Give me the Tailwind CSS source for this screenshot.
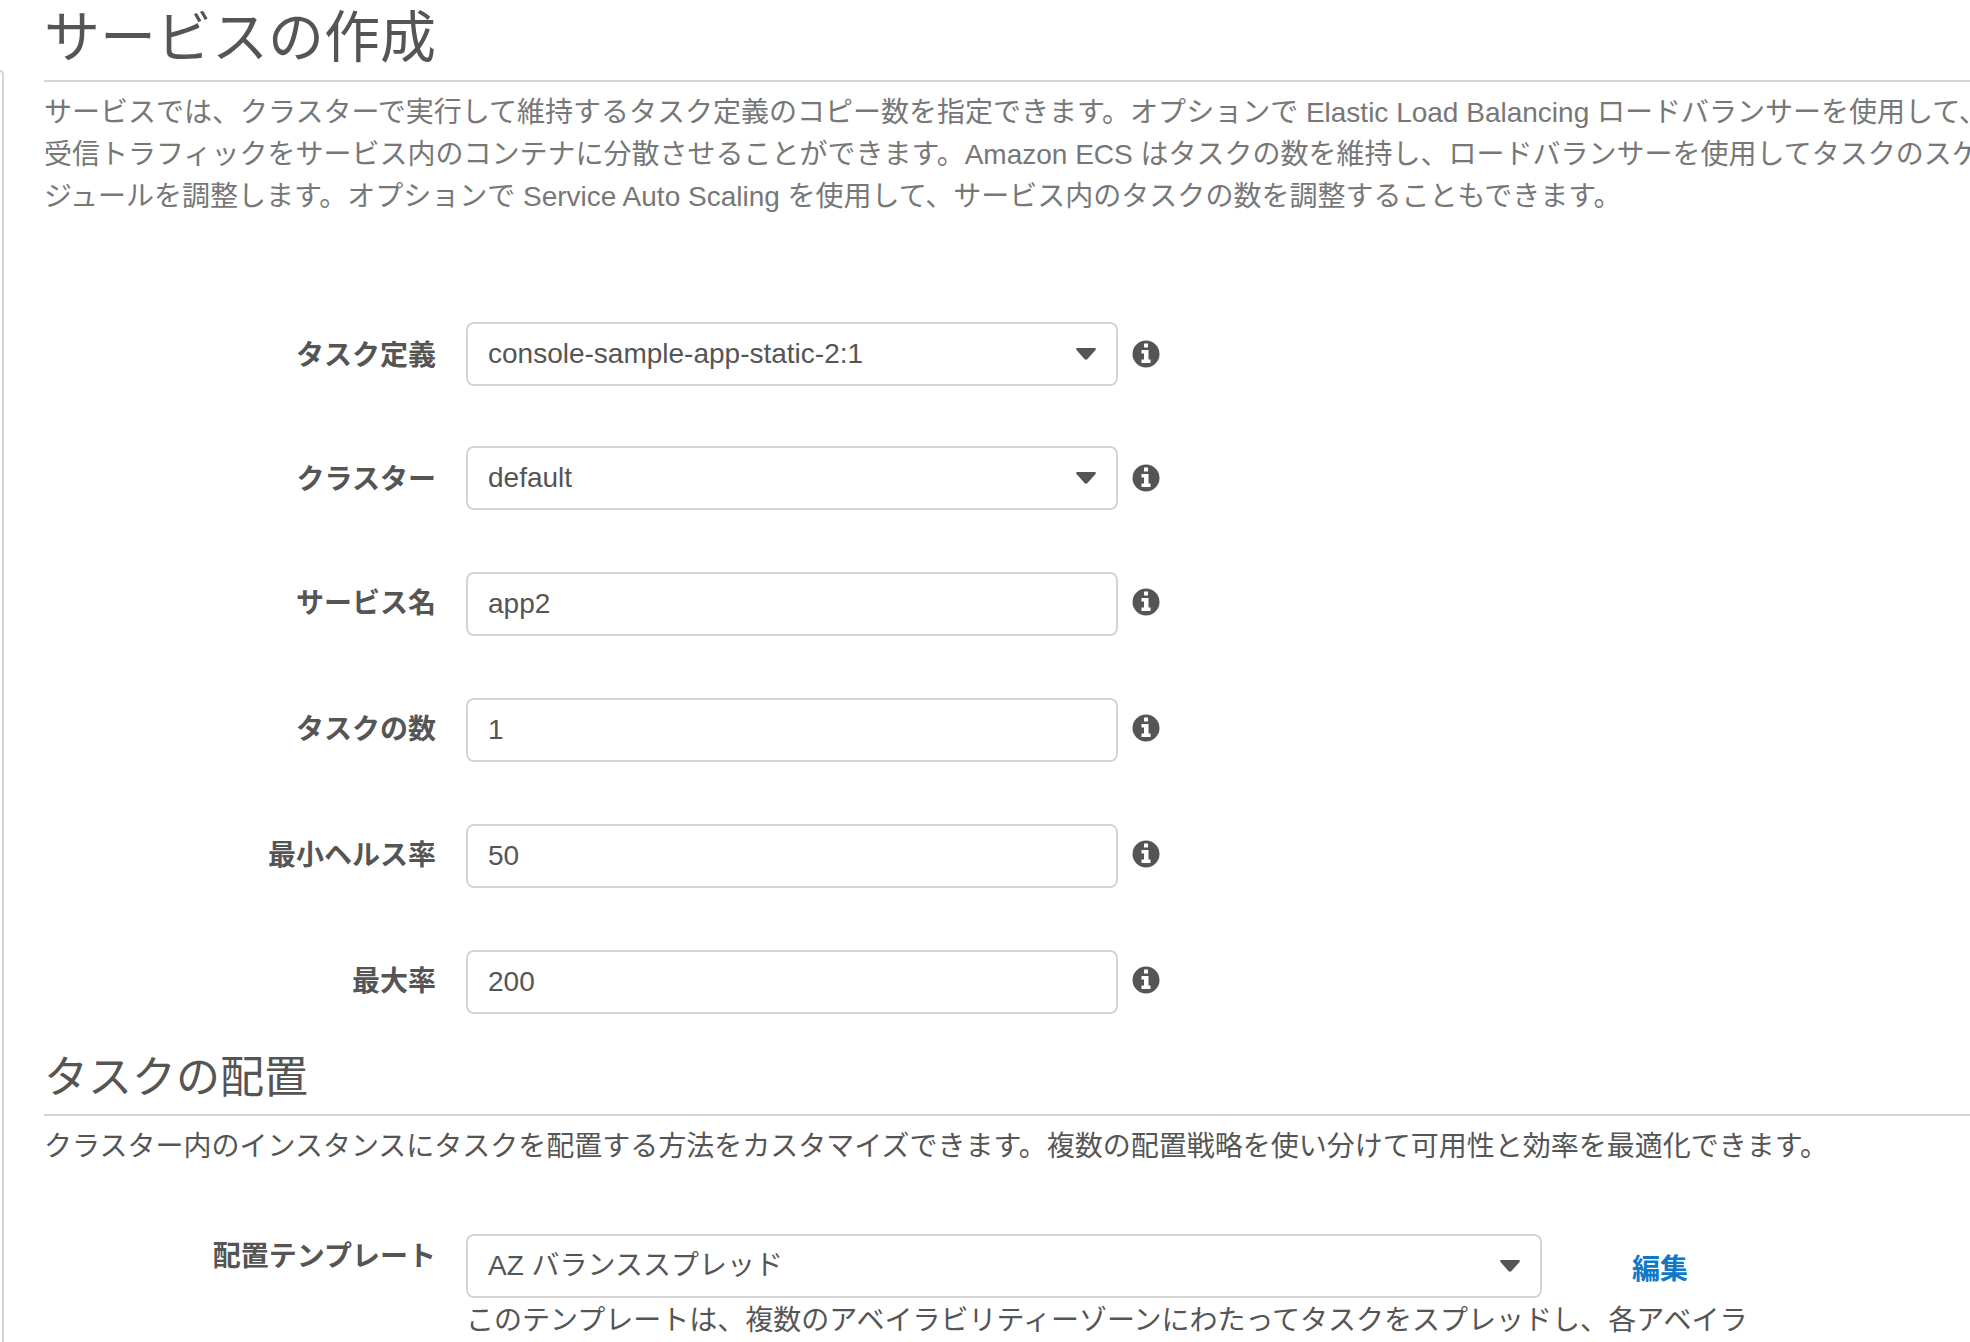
<!doctype html>
<html lang="ja">

<head>
    <meta charset="UTF-8">
    <meta name="viewport" content="width=device-width, initial-scale=1.0">
    <title>サービスの作成</title>
    <script src="https://cdn.jsdelivr.net/npm/@tailwindcss/browser@4"></script>
</head>

<body class="bg-white text-[#555555] text-[28px] leading-[42px] font-['Liberation_Sans','Noto_Sans_CJK_JP',sans-serif]">
    <svg class="hidden">
        <symbol id="info" viewBox="0 0 28 28">
            <circle cx="14" cy="14" r="13.500" fill="#555555" />
            <path fill="#ffffff" d="M12 3.500h4v4h-4zM9.500 10h7v9.500h2v3.500h-9v-3.500h2.500v-6h-2.500z" />
        </symbol>
        <symbol id="caret" viewBox="0 0 20 12">
            <path fill="#555555" d="M1 0h18q1.500 .5 .5 2l-8 9q-1.500 1.500 -3 0l-8 -9q-1 -1.500 .5 -2z" />
        </symbol>
    </svg>

    <div class="flex min-h-screen overflow-hidden">
        <!-- edge of the side panel -->
        <aside class="w-1 shrink-0 mt-[70px] border-t-2 border-r-2 border-[#d5d5d5] rounded-tr-sm"></aside>

        <main class="flex-1 min-w-0 pl-10">
            <h1 class="h-[82px] pt-1.5 text-[56px] leading-[64px] border-b-2 border-[#d5d5d5]">サービスの作成</h1>
            <p class="mt-2.5 text-[#777777] whitespace-nowrap">
                サービスでは、クラスターで実行して維持するタスク定義のコピー数を指定できます。オプションで Elastic Load Balancing ロードバランサーを使用して、<br>
                受信トラフィックをサービス内のコンテナに分散させることができます。Amazon ECS はタスクの数を維持し、ロードバランサーを使用してタスクのスケ<br>
                ジュールを調整します。オプションで Service Auto Scaling を使用して、サービス内のタスクの数を調整することもできます。
            </p>

            <form>
                <div class="mt-[104px] flex flex-col gap-[62px]">
                    <div class="-mb-0.5 flex items-center">
                        <label for="task_definition" class="w-[392px] mr-[30px] pt-1 text-right font-bold">タスク定義</label>
                        <div class="relative w-[652px]">
                            <select id="task_definition" class="w-full h-16 pl-5 pr-16 bg-white border-2 border-[#d5d5d5] rounded-lg appearance-none">
                                <option>console-sample-app-static-2:1</option>
                            </select>
                            <svg class="absolute right-[22px] top-[26px] w-5 h-3 pointer-events-none"><use href="#caret" /></svg>
                        </div>
                        <button type="button" aria-label="タスク定義の情報" class="ml-3.5"><svg class="w-7 h-7"><use href="#info" /></svg></button>
                    </div>
                    <div class="flex items-center">
                        <label for="cluster" class="w-[392px] mr-[30px] pt-1 text-right font-bold">クラスター</label>
                        <div class="relative w-[652px]">
                            <select id="cluster" class="w-full h-16 pl-5 pr-16 bg-white border-2 border-[#d5d5d5] rounded-lg appearance-none">
                                <option>default</option>
                            </select>
                            <svg class="absolute right-[22px] top-[26px] w-5 h-3 pointer-events-none"><use href="#caret" /></svg>
                        </div>
                        <button type="button" aria-label="クラスターの情報" class="ml-3.5"><svg class="w-7 h-7"><use href="#info" /></svg></button>
                    </div>
                    <div class="flex items-center">
                        <label for="service_name" class="w-[392px] mr-[30px] text-right font-bold">サービス名</label>
                        <input type="text" id="service_name" value="app2" class="w-[652px] h-16 px-5 border-2 border-[#d5d5d5] rounded-lg">
                        <button type="button" aria-label="サービス名の情報" class="ml-3.5 pb-1"><svg class="w-7 h-7"><use href="#info" /></svg></button>
                    </div>
                    <div class="flex items-center">
                        <label for="task_count" class="w-[392px] mr-[30px] text-right font-bold">タスクの数</label>
                        <input type="text" id="task_count" value="1" class="w-[652px] h-16 px-5 border-2 border-[#d5d5d5] rounded-lg">
                        <button type="button" aria-label="タスクの数の情報" class="ml-3.5 pb-1"><svg class="w-7 h-7"><use href="#info" /></svg></button>
                    </div>
                    <div class="flex items-center">
                        <label for="min_healthy" class="w-[392px] mr-[30px] text-right font-bold">最小ヘルス率</label>
                        <input type="text" id="min_healthy" value="50" class="w-[652px] h-16 px-5 border-2 border-[#d5d5d5] rounded-lg">
                        <button type="button" aria-label="最小ヘルス率の情報" class="ml-3.5 pb-1"><svg class="w-7 h-7"><use href="#info" /></svg></button>
                    </div>
                    <div class="flex items-center">
                        <label for="max_percent" class="w-[392px] mr-[30px] text-right font-bold">最大率</label>
                        <input type="text" id="max_percent" value="200" class="w-[652px] h-16 px-5 border-2 border-[#d5d5d5] rounded-lg">
                        <button type="button" aria-label="最大率の情報" class="ml-3.5 pb-1"><svg class="w-7 h-7"><use href="#info" /></svg></button>
                    </div>
                </div>

                <h2 class="mt-8 h-[70px] text-[44px] leading-[64px] border-b-2 border-[#d5d5d5]">タスクの配置</h2>
                <p class="mt-2.5 whitespace-nowrap">クラスター内のインスタンスにタスクを配置する方法をカスタマイズできます。複数の配置戦略を使い分けて可用性と効率を最適化できます。</p>

                <div class="mt-[66px] flex items-start">
                    <label for="template" class="w-[392px] mr-[30px] pt-0.5 text-right font-bold">配置テンプレート</label>
                    <div>
                        <div class="flex items-center">
                            <div class="relative w-[1076px]">
                                <select id="template" class="w-full h-16 pl-5 pr-16 bg-white border-2 border-[#d5d5d5] rounded-lg appearance-none">
                                    <option>AZ バランススプレッド</option>
                                </select>
                                <svg class="absolute right-[22px] top-[26px] w-5 h-3 pointer-events-none"><use href="#caret" /></svg>
                            </div>
                            <a href="#" class="ml-[90px] pt-2 font-bold text-[#0f78c8]">編集</a>
                        </div>
                        <p class="pt-0.5 whitespace-nowrap">このテンプレートは、複数のアベイラビリティーゾーンにわたってタスクをスプレッドし、各アベイラ</p>
                    </div>
                </div>
            </form>
        </main>
    </div>
</body>

</html>
